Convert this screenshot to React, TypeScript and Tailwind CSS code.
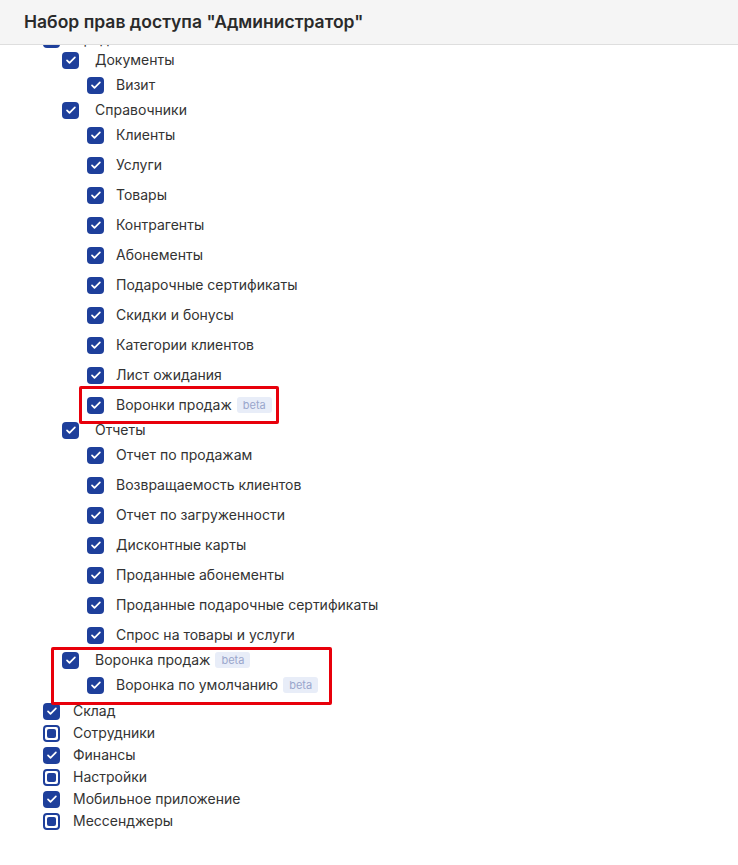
import React from "react";

type Item = { label: string; level: 1 | 2 | 3; state?: "checked" | "partial"; beta?: boolean };

const items: Item[] = [
  { label: "Продажи", level: 1 },
  { label: "Документы", level: 2 },
  { label: "Визит", level: 3 },
  { label: "Справочники", level: 2 },
  { label: "Клиенты", level: 3 },
  { label: "Услуги", level: 3 },
  { label: "Товары", level: 3 },
  { label: "Контрагенты", level: 3 },
  { label: "Абонементы", level: 3 },
  { label: "Подарочные сертификаты", level: 3 },
  { label: "Скидки и бонусы", level: 3 },
  { label: "Категории клиентов", level: 3 },
  { label: "Лист ожидания", level: 3 },
  { label: "Воронки продаж", level: 3, beta: true },
  { label: "Отчеты", level: 2 },
  { label: "Отчет по продажам", level: 3 },
  { label: "Возвращаемость клиентов", level: 3 },
  { label: "Отчет по загруженности", level: 3 },
  { label: "Дисконтные карты", level: 3 },
  { label: "Проданные абонементы", level: 3 },
  { label: "Проданные подарочные сертификаты", level: 3 },
  { label: "Спрос на товары и услуги", level: 3 },
  { label: "Воронка продаж", level: 2, beta: true },
  { label: "Воронка по умолчанию", level: 3, beta: true },
  { label: "Склад", level: 1 },
  { label: "Сотрудники", level: 1, state: "partial" },
  { label: "Финансы", level: 1 },
  { label: "Настройки", level: 1, state: "partial" },
  { label: "Мобильное приложение", level: 1 },
  { label: "Мессенджеры", level: 1, state: "partial" },
];

function Box({ state = "checked" }: { state?: "checked" | "partial" }) {
  if (state === "partial") {
    return (
      <span className="flex h-[17px] w-[17px] shrink-0 items-center justify-center rounded-[4px] border-2 border-[#1e3f9b] bg-white">
        <span className="h-[9px] w-[9px] rounded-[2px] bg-[#1e3f9b]" />
      </span>
    );
  }
  return (
    <span className="flex h-[17px] w-[17px] shrink-0 items-center justify-center rounded-[4px] bg-[#1e3f9b]">
      <svg width="12" height="12" viewBox="0 0 12 12" fill="none">
        <path d="M2 6.3l2.5 2.5 5.4-5.5" stroke="white" strokeWidth="1.7" strokeLinecap="round" strokeLinejoin="round" />
      </svg>
    </span>
  );
}

function Row({ item }: { item: Item }) {
  const rowCls =
    item.level === 1
      ? "h-[22px] pl-[43px]"
      : item.level === 2
      ? "h-5 pl-[62px]"
      : "h-[30px] pl-[87px]";
  const gap = item.level === 1 ? "ml-[13px]" : item.level === 2 ? "ml-4" : "ml-3";
  return (
    <div className={`flex items-center ${rowCls}`}>
      <Box state={item.state} />
      <span className={`${gap} text-[14px] leading-5 text-[#333]`}>{item.label}</span>
      {item.beta && (
        <span className="ml-[5px] flex h-4 items-center rounded-[3px] bg-[#e8edf8] px-[6px] text-[11px] text-[#9aa6cc]">
          beta
        </span>
      )}
    </div>
  );
}

export default function App() {
  return (
    <div className="relative h-[865px] w-[738px] overflow-hidden bg-white" style={{ fontFamily: "Inter, 'Noto Sans', sans-serif" }}>
      <div className="relative z-10 flex h-[45px] items-center border-b border-[#dedede] bg-[#f5f5f5] pl-6">
        <h1 className="text-[17.5px] font-semibold text-[#2a2a2a]">Набор прав доступа "Администратор"</h1>
      </div>
      <div className="-mt-[17px] flex flex-col">
        {items.map((it) => (
          <Row key={it.label + it.level} item={it} />
        ))}
      </div>
      <div className="pointer-events-none absolute left-[79px] top-[386px] h-[38px] w-[200px] rounded-[2px] border-[3px] border-[#e8000b]" />
      <div className="pointer-events-none absolute left-[51px] top-[647px] h-[58px] w-[281px] rounded-[2px] border-[3px] border-[#e8000b]" />
    </div>
  );
}
